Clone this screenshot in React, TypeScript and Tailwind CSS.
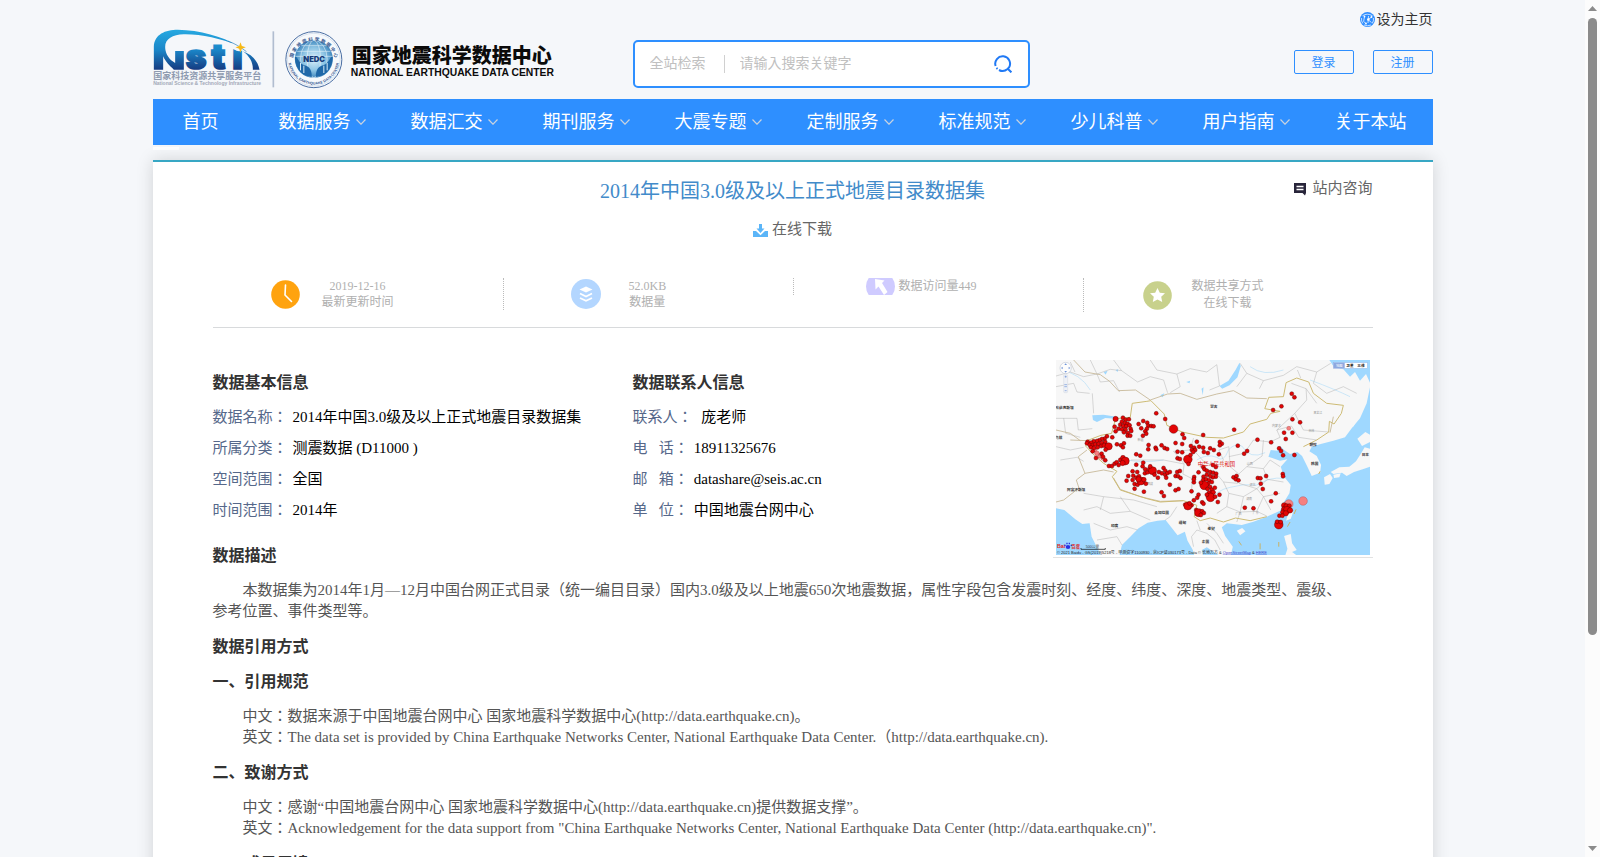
import type { ReactNode } from 'react';

const SERIF = "font-['Liberation_Serif','Noto_Sans_CJK_JP',serif]";

const navItems = [
  { label: '首页', arrow: false },
  { label: '数据服务', arrow: true },
  { label: '数据汇交', arrow: true },
  { label: '期刊服务', arrow: true },
  { label: '大震专题', arrow: true },
  { label: '定制服务', arrow: true },
  { label: '标准规范', arrow: true },
  { label: '少儿科普', arrow: true },
  { label: '用户指南', arrow: true },
  { label: '关于本站', arrow: false },
];

const basicInfo = [
  ['数据名称：', '2014年中国3.0级及以上正式地震目录数据集'],
  ['所属分类：', '测震数据 (D11000 )'],
  ['空间范围：', '全国'],
  ['时间范围：', '2014年'],
];

const contactInfo = [
  ['联系人：', '\u00a0庞老师'],
  ['电\u00a0\u00a0\u00a0话：', '18911325676'],
  ['邮\u00a0\u00a0\u00a0箱：', 'datashare@seis.ac.cn'],
  ['单\u00a0\u00a0\u00a0位：', '中国地震台网中心'],
];

// x, y, radius
const quakes: number[][] = [
  [725, 131, 6], [733, 142, 6], [694, 169, 6], [669, 180, 6], [727, 208, 6], [750, 217, 6], [702, 248, 6], [727, 248, 6],
  [707, 267, 6], [663, 277, 6], [687, 295, 6], [693, 303, 6], [699, 316, 6], [733, 315, 6], [622, 269, 6], [563, 287, 6],
  [591, 303, 6], [582, 311, 6], [552, 239, 6], [459, 255, 6], [318, 190, 6], [345, 207, 6], [370, 237, 13], [397, 253, 6],
  [402, 264, 6], [196, 207, 8], [218, 203, 6], [226, 209, 6], [236, 208, 6], [215, 215, 6], [224, 219, 6], [232, 221, 6],
  [210, 224, 6], [219, 228, 6], [228, 229, 6], [238, 226, 6], [193, 230, 6], [205, 236, 6], [215, 238, 6], [226, 239, 6],
  [241, 236, 6], [196, 244, 6], [221, 247, 6], [233, 249, 6], [243, 243, 6], [232, 257, 6], [240, 257, 6], [265, 222, 6],
  [279, 213, 6], [273, 235, 6], [291, 218, 6], [294, 227, 6], [303, 228, 6], [310, 229, 6], [290, 236, 6], [285, 244, 6],
  [288, 251, 6], [278, 257, 6], [186, 262, 6], [170, 259, 6], [163, 266, 6], [155, 267, 6], [147, 271, 6], [140, 273, 6],
  [130, 274, 6], [122, 278, 6], [112, 275, 6], [110, 280, 6], [118, 285, 6], [127, 286, 6], [135, 283, 6], [145, 282, 6],
  [155, 279, 6], [165, 276, 6], [122, 292, 6], [131, 294, 6], [142, 292, 6], [153, 288, 6], [162, 286, 7], [175, 289, 11],
  [127, 304, 6], [166, 299, 6], [137, 324, 6], [154, 311, 6], [165, 331, 6], [158, 320, 6], [200, 283, 6], [212, 286, 6],
  [221, 280, 6], [218, 292, 6], [258, 313, 6], [270, 317, 6], [176, 348, 6], [185, 348, 6], [193, 341, 6], [199, 337, 6],
  [205, 345, 6], [211, 330, 7], [218, 323, 7], [225, 333, 12], [217, 339, 8], [258, 344, 6], [277, 349, 6], [279, 338, 6],
  [295, 285, 6], [294, 298, 6], [316, 293, 6], [318, 298, 6], [334, 286, 6], [343, 294, 6], [351, 297, 6], [376, 279, 6],
  [396, 282, 6], [382, 305, 6], [396, 307, 6], [382, 325, 6], [389, 327, 6], [413, 328, 13], [421, 315, 6], [415, 342, 6],
  [422, 288, 6], [432, 293, 6], [440, 275, 6], [425, 300, 6], [435, 300, 6], [429, 306, 6], [447, 290, 6], [459, 293, 6],
  [461, 306, 6], [473, 309, 6], [480, 295, 6], [491, 300, 6], [506, 313, 6], [509, 276, 6], [515, 281, 6], [509, 286, 6],
  [234, 378, 6], [247, 364, 6], [249, 377, 6], [261, 366, 6], [229, 392, 6], [247, 390, 6], [258, 383, 6], [266, 379, 6],
  [253, 402, 6], [262, 404, 6], [272, 393, 12], [265, 388, 8], [281, 389, 7], [287, 401, 6], [253, 416, 6], [281, 425, 6],
  [284, 370, 6], [285, 358, 6], [292, 367, 6], [298, 358, 7], [307, 362, 12], [313, 374, 6], [300, 349, 6], [323, 383, 6],
  [326, 366, 6], [340, 354, 6], [345, 362, 6], [335, 370, 6], [345, 374, 6], [352, 369, 6], [359, 366, 6], [348, 383, 6],
  [381, 366, 6], [389, 363, 6], [376, 378, 6], [384, 379, 6], [391, 384, 6], [359, 404, 6], [376, 421, 6], [385, 417, 6],
  [334, 427, 6], [341, 438, 6], [424, 424, 6], [431, 397, 6], [432, 381, 6], [431, 388, 6], [445, 367, 6], [459, 351, 6],
  [463, 358, 6], [470, 362, 6], [480, 366, 6], [489, 368, 6], [498, 371, 6], [497, 380, 6], [488, 382, 6], [480, 378, 6],
  [470, 374, 6], [460, 380, 6], [459, 390, 6], [468, 388, 6], [477, 391, 6], [485, 396, 6], [474, 401, 6], [462, 406, 13],
  [452, 398, 6], [480, 411, 6], [485, 419, 6], [472, 417, 6], [494, 413, 6], [478, 430, 8], [489, 427, 7], [481, 442, 13],
  [470, 434, 6], [495, 440, 6], [508, 434, 6], [503, 456, 6], [497, 351, 6], [488, 345, 6], [445, 434, 6], [441, 443, 6],
  [456, 457, 6], [460, 461, 6], [431, 451, 6], [424, 466, 6], [405, 464, 6], [413, 468, 12], [418, 460, 6], [438, 480, 6],
  [445, 488, 12], [456, 484, 6], [461, 489, 6], [452, 495, 6], [550, 382, 6], [559, 378, 6], [557, 388, 6], [565, 391, 6],
  [623, 384, 6], [631, 385, 6], [648, 378, 6], [632, 401, 6], [638, 417, 6], [698, 372, 6], [699, 379, 6], [677, 430, 6],
  [663, 454, 6], [584, 473, 6], [610, 475, 6], [702, 466, 8], [710, 470, 9], [718, 467, 6], [702, 478, 8], [711, 480, 11],
  [720, 481, 8], [698, 487, 7], [707, 490, 8], [688, 497, 6], [697, 497, 6], [686, 524, 13], [681, 515, 6], [692, 516, 6],
];

const faintQuakes: number[][] = [
  [759, 453, 13], [716, 462, 13], [716, 235, 6], [134, 300, 6], [140, 310, 7], [150, 316, 6], [158, 324, 7], [147, 320, 5],
];

const mapLabels: [number, number, string][] = [
  [15, 176, '哈萨克斯坦'], [480, 174, '蒙古'], [778, 289, '朝鲜'], [783, 345, '韩国'], [935, 319, '日本'],
  [50, 422, '阿富汗斯坦'], [182, 532, '印度'], [312, 491, '孟加拉国'], [386, 521, '缅甸'], [472, 539, '老挝'],
  [455, 578, '泰国'], [14, 268, '乌兹'],
];

function Logo() {
  return (
    <svg
      className="h-[60px] w-[401px] shrink-0"
      viewBox="38 88 1202 180"
      role="img"
      aria-label="国家地震科学数据中心"
    >
      <defs>
        <linearGradient id="nsti" x1="0" y1="90" x2="0" y2="212" gradientUnits="userSpaceOnUse">
          <stop offset="0" stopColor="#27a9e1" />
          <stop offset="0.5" stopColor="#1a86c8" />
          <stop offset="1" stopColor="#15397f" />
        </linearGradient>
        <radialGradient id="globe">
          <stop offset="0" stopColor="#dff1fa" />
          <stop offset="0.6" stopColor="#8cc4e4" />
          <stop offset="1" stopColor="#3d86bd" />
        </radialGradient>
        <path id="arcTop" d="M456 188 A64 64 0 0 1 584 188" />
        <path id="arcBottom" d="M444 190 A77 77 0 0 0 596 190" />
      </defs>

      {/* Nsti */}
      <path
        d="M40 210 V140 C42 104 74 90 112 90 C178 91 245 110 292 138 C240 116 180 103 130 104 C96 105 74 118 74 142 C74 158 82 172 92 182 L104 190 V154 H130 V210 H100 C88 198 76 188 68 170 V210 Z"
        fill="url(#nsti)"
      />
      <path d="M307 155 C336 166 352 184 357 210 H337 C338 190 328 170 307 155 Z" fill="url(#nsti)" />
      <g
        fontSize="106"
        fontWeight="900"
        fontFamily="Inter, sans-serif"
        fill="url(#nsti)"
        stroke="url(#nsti)"
        strokeWidth="5"
      >
        <text x="136 212 275" y="208">
          sti
        </text>
      </g>
      <circle cx="296" cy="134" r="21" fill="#f5f7fa" />
      <path d="M262 124 C282 131 300 142 318 156" fill="none" stroke="#2a7fbd" strokeWidth="2" />
      <path d="M300 128 L304 139 L316 143 L304 147 L300 159 L296 147 L285 143 L296 139 Z" fill="#f7b916" />
      <text x="38" y="239" fontSize="27" fontWeight="700" fontFamily="'Noto Sans CJK SC', sans-serif" fill="#8f9bb0">
        国家科技资源共享服务平台
      </text>
      <text x="38" y="257" fontSize="15" fontWeight="700" fontFamily="'Liberation Sans', sans-serif" fill="#a3a9b8">
        National Science &amp; Technology Infrastructure
      </text>

      <rect x="396" y="95" width="5" height="168" fill="#b1bdd0" />

      {/* NEDC emblem */}
      <circle cx="520" cy="180" r="84" fill="#f6f9fc" stroke="#4a6ea3" strokeWidth="3" />
      <circle cx="520" cy="180" r="79" fill="none" stroke="#9db3d0" strokeWidth="1" />
      <circle cx="520" cy="178" r="57" fill="url(#globe)" />
      <g fill="none" stroke="#f4fafd" strokeWidth="2" opacity="0.8">
        <path d="M470 155 H570 M464 170 H576 M480 138 H560" />
        <ellipse cx="520" cy="178" rx="20" ry="56" />
        <ellipse cx="520" cy="178" rx="40" ry="56" />
      </g>
      <path
        d="M463 172 C470 166 474 190 490 196 C504 200 514 206 514 232 C488 230 465 212 463 172 Z M577 172 C570 166 566 190 550 196 C536 200 526 206 526 232 C552 230 575 212 577 172 Z"
        fill="#1f68a8"
      />
      <path d="M480 190 V212 M490 198 V220 M560 190 V212 M550 198 V220" stroke="#d9ecf7" strokeWidth="3" />
      <text
        x="521"
        y="187"
        fontSize="23"
        fontWeight="900"
        textAnchor="middle"
        fontFamily="Inter, sans-serif"
        fill="#163c78"
      >
        NEDC
      </text>
      <g fill="#35578f" fontFamily="'Liberation Sans', 'Noto Sans CJK SC', sans-serif" fontWeight="700">
        <text fontSize="14">
          <textPath href="#arcTop" startOffset="50%" textAnchor="middle">
            国 家 地 震 科 学 数 据 中 心
          </textPath>
        </text>
        <text fontSize="11">
          <textPath href="#arcBottom" startOffset="50%" textAnchor="middle">
            NATIONAL EARTHQUAKE DATA CENTER
          </textPath>
        </text>
      </g>

      <text x="634" y="189" fontSize="60" fontWeight="900" fontFamily="'Noto Sans CJK SC', sans-serif" fill="#0b0b0b">
        国家地震科学数据中心
      </text>
      <text x="631" y="229" fontSize="31" fontWeight="700" fontFamily="'Liberation Sans', sans-serif" fill="#0b0b0b">
        NATIONAL EARTHQUAKE DATA CENTER
      </text>
    </svg>
  );
}

function SearchIcon() {
  return (
    <svg className="size-[18px]" viewBox="0 0 18 18" fill="none" stroke="#2079f5" strokeWidth="2">
      <path d="M1.6 11 A7.4 7.4 0 1 1 15 12.5 L13.5 14 A7.4 7.4 0 0 1 5 15" />
      <path d="M14 14 L17.4 17.4" />
      <path d="M2.4 13 L4 14.2" strokeDasharray="1.5 1" />
    </svg>
  );
}

function GlobeIcon() {
  return (
    <svg className="size-[15px]" viewBox="0 0 15 15">
      <circle cx="7.5" cy="7.5" r="7.5" fill="#2e8dff" />
      <g fill="none" stroke="#eaf4ff" strokeWidth="0.8">
        <path d="M2.5 3.8 Q7 0.6 12.5 3.8 M1.6 6 Q1 9 2.8 11.4 M13.4 6 Q14 9 12.2 11.4 M4 13 Q7.5 14.6 11 13" />
        <path d="M4.5 4.5 L3.6 9.5 L6 11.5 M8.5 4 L8 11 M8.3 7.5 L11.5 5 M9 8.5 L11.5 10.5" />
      </g>
      <g fill="#fff">
        <circle cx="4.5" cy="4.5" r="0.9" />
        <circle cx="8.3" cy="7.5" r="1.3" />
        <circle cx="11.5" cy="5" r="0.9" />
        <circle cx="6" cy="11.5" r="0.9" />
      </g>
    </svg>
  );
}

function QuakeMap() {
  return (
    <svg className="h-[195px] w-full" viewBox="17 30 943 585" preserveAspectRatio="none" role="img" aria-label="地震分布图">
      <rect x="17" y="30" width="943" height="585" fill="#f7f7f7" />

      {/* sea and lakes */}
      <g fill="#9fd8ff">
        <path d="M838 30 H960 V98 L948 72 L930 92 L915 66 L900 80 L880 58 L852 52 Z" />
        <path d="M960 112 L950 160 L930 205 L905 235 L885 262 L850 272 L812 282 L785 290 L778 304 L800 318 L813 345 L810 368 L785 378 L772 350 L756 318 L742 306 L720 312 L702 300 L690 288 L682 302 L662 300 L655 320 L690 332 L712 328 L692 350 L702 380 L722 405 L718 430 L702 455 L690 482 L650 500 L610 515 L575 525 L530 520 L515 532 L525 558 L548 590 L542 615 H960 Z" />
        <path d="M17 475 L42 480 L75 508 L96 522 L118 520 L124 560 L152 615 H17 Z" />
        <path d="M208 615 L215 585 L240 560 L265 535 L292 518 L322 512 L346 510 L362 530 L382 556 L404 545 L412 572 L428 600 L432 615 Z" />
        <path d="M455 600 L470 592 L488 604 L505 615 H458 Z" />
        <path d="M508 108 L535 92 L556 60 L568 38 L572 48 L562 82 L538 106 L516 116 Z" />
        <path d="M126 196 L160 194 L198 200 L196 206 L165 204 L140 216 L128 210 Z" />
        <path d="M454 116 L460 112 L458 136 Z M408 96 L420 92 L418 100 Z M196 60 L204 58 L202 66 Z M160 66 L172 62 L166 74 Z M330 136 L342 130 L338 142 Z" />
      </g>
      <g fill="#f7f7f7">
        <path d="M822 382 L840 372 L848 384 L838 402 L824 404 Z M850 374 L872 370 L868 382 L852 384 Z" />
        <path d="M842 366 L868 352 L898 350 L918 334 L932 312 L944 292 L960 296 V350 L938 358 L912 366 L890 378 L876 368 L850 372 Z" />
        <path d="M922 266 L946 246 L960 254 V276 L936 288 Z M900 210 L915 180 L930 190 L910 230 Z" />
        <path d="M718 478 L730 484 L722 506 L708 512 Z M560 542 L576 534 L586 544 L570 556 Z" />
        <path d="M702 558 L722 552 L726 580 L740 600 L726 606 L738 615 H706 L712 596 Z" />
      </g>

      {/* rivers */}
      <g fill="none" stroke="#b5def7" strokeWidth="2">
        <path d="M440 330 Q470 310 500 322 Q520 340 535 300 Q550 280 575 288 Q600 330 645 308" />
        <path d="M480 450 Q500 420 540 412 Q580 400 620 405 Q660 380 700 385" />
        <path d="M30 60 Q90 70 120 120 M600 50 Q640 80 700 60 M780 90 Q860 120 900 140 M230 330 Q280 340 340 330" />
      </g>

      {/* province and country borders */}
      <g fill="none" stroke="#b3b3b3" strokeWidth="1.5">
        <path d="M17 78 L60 66 L100 80 L140 72 L150 96 L190 92 L208 126 M17 110 L70 100 L80 126 L118 130 M60 36 L74 66 M120 30 L140 72 L180 58 L214 62 L262 96 L300 80 L340 90 L352 128" />
        <path d="M190 30 L214 62 M300 30 L320 60 L380 72 L420 56 L470 66 L500 44 M380 72 L390 110 L360 128 M570 40 L590 70 L640 92 L700 76 L740 50 L800 66 L842 40" />
        <path d="M500 44 L508 108 L478 120 M640 92 L628 116 M590 70 L560 110 M742 60 L752 84 M800 66 L790 100 L830 130 L880 110 L920 130" />
        <path d="M17 205 L80 205 L84 240 L126 236 M40 204 L46 250 L90 262 M126 130 L130 190 M17 290 L60 300 L100 292 M30 330 L80 322 L100 334" />
        <path d="M242 330 L340 330 L402 342 L398 372 L426 386 L424 430 M402 342 L370 304 L420 300 L430 264 M430 300 L462 336 L500 350 L520 330 L506 300 L536 290" />
        <path d="M536 290 L540 350 L566 372 L562 400 L520 396 L500 372 M536 320 L582 310 L610 270 L660 276 L690 262 L680 240 L724 228 L746 262 L800 270" />
        <path d="M640 270 L636 318 L590 350 L566 372 M590 350 L640 356 L660 330 L690 350 M640 356 L652 388 L700 396 M566 400 L620 416 L652 388 M620 416 L640 440 L690 430" />
        <path d="M520 396 L536 430 L580 440 L620 416 M536 430 L530 470 L500 490 M580 440 L570 486 L620 484 L640 440 M530 470 L570 486 L560 516 M620 484 L650 498 M640 440 L662 480" />
        <path d="M724 100 L768 116 L770 150 L734 190 L760 240 L836 246 M734 190 L680 240 M768 116 L800 160" />
        <path d="M100 480 L140 470 L180 490 L240 484 L300 510 M130 520 L180 540 L230 530 L262 540 M160 440 L150 480 M210 440 L240 484 M140 570 L200 560 L215 585 M100 430 L160 440 L250 450 L320 470" />
        <path d="M424 560 L440 540 L470 550 L494 570 L510 600 M440 512 L450 540 M470 520 L500 550 L520 580 M424 560 L430 590 M380 470 L360 500 L345 510" />
      </g>
      <g fill="none" stroke="#c4b593" strokeWidth="2.5">
        <path d="M70 30 L104 66 L150 74 L178 94 L204 122 L256 120 L300 150 L352 132 L390 130 L440 148 L500 132 L550 122 L590 144 L650 146" />
        <path d="M190 384 L210 418 L270 440 L330 454 L400 452" />
        <path d="M110 300 L84 320 L104 370 L78 390 L86 414 L40 450 L17 456 M60 270 L110 272 M104 370 L160 360 L190 366" />
        <path d="M17 240 L60 250 L90 272 M840 248 L850 200" />
      </g>
      <path
        d="M110 272 L152 256 L184 250 L196 206 L240 202 L246 160 L290 154 L302 152 L342 192 L350 226 L396 246 L470 262 L520 264 L580 246 L600 222 L650 208 L662 190 L690 184 L644 176 L656 142 L700 140 L708 98 L740 84 L776 96 L790 130 L830 160 L880 166 L874 190 L852 222 L838 214 L836 246 L800 270 L760 290 M650 500 L600 512 L556 504 L520 516 L480 504 L450 512 L432 500 L440 466 L400 452 L330 456 L290 446 L210 420 L186 380 L200 364 L160 340 L128 312 L106 288 L110 272"
        fill="none"
        stroke="#cdbb74"
        strokeWidth="3"
      />
      <path
        d="M738 478 L732 492 M712 530 L720 516 M686 576 V590 M630 580 V598 M566 574 L574 586 M810 364 L806 372"
        stroke="#c9b265"
        strokeWidth="3"
      />

      <g fontFamily="'Liberation Sans', 'Noto Sans CJK SC', sans-serif">
        <g fontSize="11" fontWeight="700" fill="#333">
          {mapLabels.map(([x, y, name]) => (
            <text key={name} x={x} y={y}>{name}</text>
          ))}
        </g>
        <g fontSize="9" fill="#999">
          <text x="262" y="274">新疆</text>
          <text x="790" y="193">黑龙江</text>
          <text x="775" y="245">吉林</text>
          <text x="666" y="231">内蒙古</text>
          <text x="590" y="346">山西</text>
          <text x="598" y="408">湖北</text>
          <text x="588" y="450">湖南</text>
          <text x="556" y="494">广西</text>
          <text x="608" y="492">广东</text>
          <text x="290" y="404">西藏</text>
        </g>

        <g fill="#f58080" stroke="#a33" strokeWidth="1">
          {faintQuakes.map(([x, y, r]) => (
            <circle key={`${x}-${y}`} cx={x} cy={y} r={r} />
          ))}
        </g>
        <g fill="#e30505" stroke="#4d0000" strokeWidth="1.2">
          {quakes.map(([x, y, r]) => (
            <circle key={`${x}-${y}`} cx={x} cy={y} r={r} />
          ))}
        </g>
        <text x="443" y="348" fontSize="16" fill="#d11">中华人民共和国</text>

        {/* pan and zoom control */}
        <circle cx="46" cy="54" r="17" fill="#fdfdfd" stroke="#b5bccb" strokeWidth="1.5" />
        <path d="M46 40 L50 45 H42 Z M46 68 L50 63 H42 Z M32 54 L37 50 V58 Z M60 54 L55 50 V58 Z" fill="#6f94d8" />
        <rect x="40" y="74" width="12" height="54" rx="3" fill="#eef1f6" stroke="#c3c9d6" />
        <path d="M43 80 H49 M46 77 V83 M42 104 H50 M42 110 H50 M43 122 H49" stroke="#6f94d8" strokeWidth="2" />

        {/* map type switch */}
        <rect x="850" y="38" width="102" height="17" fill="#fff" stroke="#8ba4dc" />
        <rect x="850" y="38" width="34" height="17" fill="#8ea8e0" />
        <text x="858" y="51" fontSize="10" fill="#fff">地图</text>
        <text x="889" y="51" fontSize="11" fontWeight="700" fill="#222">卫星</text>
        <text x="922" y="51" fontSize="11" fontWeight="700" fill="#222">三维</text>

        <text x="20" y="595" fontSize="16" fontWeight="700" fill="#e1251b">Bai</text>
        <ellipse cx="53" cy="591" rx="7" ry="6" fill="#2932e1" />
        <path d="M44 584 V588 M50 578 V583 M57 578 V583 M63 584 V588" stroke="#2932e1" strokeWidth="4" />
        <text x="63" y="595" fontSize="13" fontWeight="700" fill="#e1251b">百度</text>
        <text x="106" y="593" fontSize="11" fill="#333">500公里</text>
        <path d="M92 594 V598 H165 V594" fill="none" stroke="#000" strokeWidth="2" />
        <text x="20" y="611" fontSize="12" fill="#222">
          © 2021 Baidu - GS(2019)5218号 - 甲测资字1100930 - 京ICP证030173号 - Data © 长地万方 &amp;{' '}
          <tspan fill="#44c" textDecoration="underline">OpenStreetMap</tspan> &amp;{' '}
          <tspan fill="#44c" textDecoration="underline">HERE</tspan>
        </text>
      </g>
    </svg>
  );
}

function Heading({ children }: { children: ReactNode }) {
  return <h3 className="text-base leading-[21px] font-bold text-[#333]">{children}</h3>;
}

function InfoList({ title, rows }: { title: string; rows: string[][] }) {
  return (
    <section>
      <Heading>{title}</Heading>
      <dl className="mt-[14px] flex flex-col gap-[10px] text-[15px] leading-[21px] whitespace-nowrap">
        {rows.map(([label, value]) => (
          <div key={label} className="flex gap-[5px]">
            <dt className="text-[#56688a]">{label}</dt>
            <dd className="text-black">{value}</dd>
          </div>
        ))}
      </dl>
    </section>
  );
}

function Stats() {
  return (
    <div className="flex items-start border-b border-[#d8dadc] pb-[15px] text-center text-xs text-[#b0b0b0]">
      <div className="flex w-1/4 gap-[22px] pl-[58px] leading-4">
        <svg className="mt-[2px] size-[29px]" viewBox="0 0 29 29">
          <circle cx="14.5" cy="14.5" r="14.3" fill="#ffa30f" />
          <path d="M14.5 5 L14 15 L20.5 21.5" fill="none" stroke="#fff" strokeWidth="1.6" strokeLinecap="round" />
        </svg>
        <p>2019-12-16<br />最新更新时间</p>
      </div>
      <div className="flex w-1/4 items-start gap-7 border-l border-dotted border-[#bbb] pl-[67px] leading-4">
        <svg className="mt-px size-[30px]" viewBox="0 0 30 30">
          <circle cx="15" cy="15" r="15" fill="#b3d6ff" />
          <path d="M15 7.5 L21.5 10.5 L15 13.5 L8.5 10.5 Z" fill="#fff" />
          <path d="M9 14.5 L15 17.5 L21 14.5 M9 19 L15 21.7 L21 19" fill="none" stroke="#fff" strokeWidth="1.8" />
        </svg>
        <p>52.0KB<br />数据量</p>
      </div>
      <div className="flex w-1/4 gap-1 border-l border-dotted border-[#bbb] pl-[72px] leading-[17px]">
        <svg className="h-[17px] w-[29px]" viewBox="0 6 29 17">
          <circle cx="14.5" cy="14.5" r="14.5" fill="#cfcbff" />
          <path d="M9 7 L18.5 8.5 L16 11 L21.5 20 L18 23 L12.5 14.5 L9.5 17.5 Z" fill="#fff" />
        </svg>
        <p>数据访问量449</p>
      </div>
      <div className="flex w-1/4 gap-5 border-l border-dotted border-[#bbb] pl-[59px] leading-[17px]">
        <svg className="mt-[3px] size-[29px]" viewBox="0 0 29 29">
          <circle cx="14.5" cy="14.5" r="14.3" fill="#c8d18c" />
          <path
            d="M14.5 7 L16.8 11.7 L22 12.3 L18.2 15.8 L19.2 21 L14.5 18.5 L9.8 21 L10.8 15.8 L7 12.3 L12.2 11.7 Z"
            fill="#fff"
          />
        </svg>
        <p>数据共享方式<br />在线下载</p>
      </div>
    </div>
  );
}

function Scrollbar() {
  return (
    <div className="flex w-[15px] shrink-0 flex-col items-center bg-[#fcfcfc] py-[6px]" aria-hidden="true">
      <svg className="h-[5px] w-[9px]" viewBox="0 0 9 5"><path d="M4.5 0 L9 5 H0 Z" fill="#8b8b8b" /></svg>
      <div className="mt-[7px] flex w-full flex-1 justify-center">
        <div className="h-[74.5%] w-[9px] rounded-full bg-[#8b8b8b]" />
      </div>
      <svg className="h-[5px] w-[9px]" viewBox="0 0 9 5"><path d="M0 0 H9 L4.5 5 Z" fill="#8b8b8b" /></svg>
    </div>
  );
}

export default function App() {
  return (
    <div className={`flex h-screen overflow-hidden bg-[#f5f7fa] ${SERIF}`}>
      <div className="min-w-0 flex-1 overflow-hidden">
        <div className="mx-auto max-w-[1280px]">
          <header className="flex h-[99px] justify-between">
            <div className="flex">
              <div className="pt-[29px]">
                <Logo />
              </div>
              <form
                className="mt-10 ml-[79px] flex h-12 w-[397px] items-center rounded-[5px] border-2 border-[#2e8fff] bg-white pr-4 pl-[15px] text-sm"
                onSubmit={(e) => e.preventDefault()}
              >
                <select aria-label="检索范围" className="w-[74px] appearance-none bg-transparent text-[#c0c0c0] outline-none">
                  <option>全站检索</option>
                </select>
                <span className="h-[18px] w-px bg-[#d0d0d0]" />
                <input
                  type="text"
                  aria-label="搜索关键字"
                  placeholder="请输入搜索关键字"
                  className="min-w-0 flex-1 pl-[15px] outline-none placeholder:text-[#c0c0c0]"
                />
                <button type="submit" aria-label="搜索">
                  <SearchIcon />
                </button>
              </form>
            </div>
            <div className="flex flex-col items-end pt-[9px]">
              <a href="#home" className="flex items-center gap-[2px] text-sm leading-[21px] text-[#333]">
                <GlobeIcon />
                设为主页
              </a>
              <div className="mt-5 flex gap-[19px] text-xs text-[#2e8fff]">
                <button className="h-6 w-[60px] rounded-[2px] border border-[#2e8fff] pt-px">登录</button>
                <button className="h-6 w-[60px] rounded-[2px] border border-[#2e8fff] pt-px">注册</button>
              </div>
            </div>
          </header>

          <nav className="flex h-[46px] overflow-hidden bg-[#2e8fff] text-lg text-white">
            {navItems.map((item) => (
              <a
                key={item.label}
                href="#nav"
                className={`flex shrink-0 items-center gap-[5px] pl-[30px] whitespace-nowrap ${item.arrow ? 'pr-[15px]' : 'pr-[30px]'}`}
              >
                {item.label}
                {item.arrow && (
                  <svg className="h-[6px] w-[10px]" viewBox="0 0 10 6" fill="none" stroke="#c9d3e0" strokeWidth="1.2">
                    <path d="M0.5 0.5 L5 5.2 L9.5 0.5" />
                  </svg>
                )}
              </a>
            ))}
          </nav>
          <div className="mt-[2px] h-[3px] w-[26px] bg-white" />

          <main className="mt-[10px] border-t-2 border-[#38a7c4] bg-white px-[60px] pb-10 shadow-[0_0_16px_rgba(0,0,0,0.15)]">
            <div className="grid grid-cols-[1fr_auto_1fr] pt-[14px]">
              <h1 className="col-start-2 text-xl leading-[30px] text-[#428bca]">2014年中国3.0级及以上正式地震目录数据集</h1>
              <a href="#consult" className="flex h-6 items-center gap-[6px] justify-self-end text-[15px] text-[#666]">
                <svg className="mt-[2px] h-[13px] w-3" viewBox="0 0 12 13">
                  <path d="M0 0 H12 V10 L11 12.5 L8.5 10 H0 Z" fill="#28253a" />
                  <path d="M2.5 3.5 H9.5 M2.5 6.5 H9.5" stroke="#fff" strokeWidth="1.3" />
                </svg>
                站内咨询
              </a>
            </div>
            <div className="mt-3 flex justify-center">
              <a href="#download" className="flex items-center gap-1 text-[15px] leading-[22px] text-[#666]">
                <svg className="mt-[3px] h-[13px] w-[15px]" viewBox="0 0 15 13">
                  <path d="M6 0 H9 V4.5 H11.5 L7.5 9 L3.5 4.5 H6 Z" fill="#5bb5f8" />
                  <path d="M0 7 H3 L7.5 11.3 L12 7 H15 V13 H0 Z" fill="#5bb5f8" />
                </svg>
                在线下载
              </a>
            </div>

            <div className="mt-[38px]">
              <Stats />
            </div>

            <div className="mt-8 flex items-start">
              <div className="flex-1 pt-3">
                <div className="flex">
                  <div className="w-[420px]">
                    <InfoList title="数据基本信息" rows={basicInfo} />
                  </div>
                  <InfoList title="数据联系人信息" rows={contactInfo} />
                </div>
                <div className="mt-6">
                  <Heading>数据描述</Heading>
                </div>
              </div>
              <div className="w-80 border-b border-[#e2e2e2] px-[3px] pb-[2px]">
                <QuakeMap />
              </div>
            </div>

            <div className="mt-[14px] flex flex-col gap-[14px] text-[15px] leading-[21px] text-[#555]">
              <p className="pr-6 indent-[30px]">
                本数据集为2014年1月—12月中国台网正式目录（统一编目目录）国内3.0级及以上地震650次地震数据，属性字段包含发震时刻、经度、纬度、深度、地震类型、震级、参考位置、事件类型等。
              </p>
              <Heading>数据引用方式</Heading>
              <Heading>一、引用规范</Heading>
              <div className="pl-[30px]">
                <p>中文：数据来源于中国地震台网中心 国家地震科学数据中心(http://data.earthquake.cn)。</p>
                <p>英文：The data set is provided by China Earthquake Networks Center, National Earthquake Data Center.（http://data.earthquake.cn).</p>
              </div>
              <Heading>二、致谢方式</Heading>
              <div className="pl-[30px]">
                <p>中文：感谢“中国地震台网中心 国家地震科学数据中心(http://data.earthquake.cn)提供数据支撑”。</p>
                <p>英文：Acknowledgement for the data support from "China Earthquake Networks Center, National Earthquake Data Center (http://data.earthquake.cn)".</p>
              </div>
              <Heading>三、成果反馈</Heading>
            </div>
          </main>
        </div>
      </div>
      <Scrollbar />
    </div>
  );
}
